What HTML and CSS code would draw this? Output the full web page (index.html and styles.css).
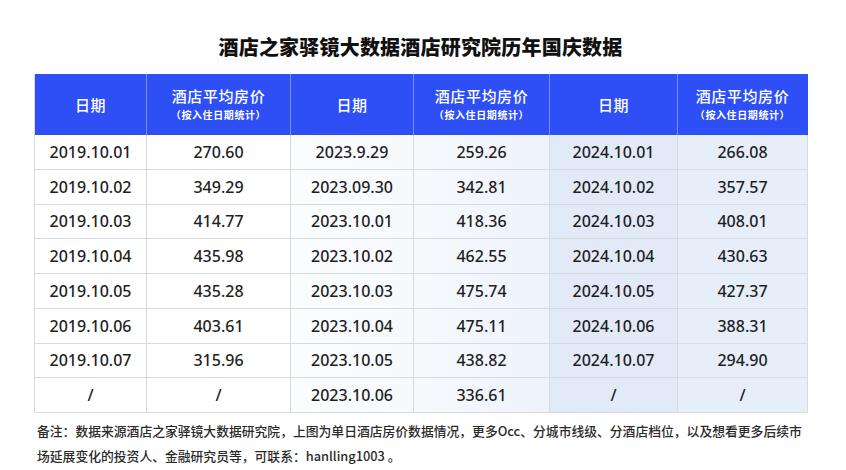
FILE: index.html
```html
<!DOCTYPE html>
<html lang="zh-CN">
<head>
<meta charset="utf-8">
<title>酒店之家驿镜大数据酒店研究院历年国庆数据</title>
<link rel="stylesheet" href="styles.css">
</head>
<body>
<div class="page">
  <h1 class="title">酒店之家驿镜大数据酒店研究院历年国庆数据</h1>
  <div class="grid">
    <div class="hd"><span class="hd-main">日期</span></div>
    <div class="hd"><span class="hd-main">酒店平均房价</span><span class="hd-sub">（按入住日期统计）</span></div>
    <div class="hd"><span class="hd-main">日期</span></div>
    <div class="hd"><span class="hd-main">酒店平均房价</span><span class="hd-sub">（按入住日期统计）</span></div>
    <div class="hd"><span class="hd-main">日期</span></div>
    <div class="hd last"><span class="hd-main">酒店平均房价</span><span class="hd-sub">（按入住日期统计）</span></div>

    <div class="c c1">2019.10.01</div><div class="c c2">270.60</div><div class="c c3">2023.9.29</div><div class="c c4">259.26</div><div class="c c5">2024.10.01</div><div class="c c6">266.08</div>
    <div class="c c1">2019.10.02</div><div class="c c2">349.29</div><div class="c c3">2023.09.30</div><div class="c c4">342.81</div><div class="c c5">2024.10.02</div><div class="c c6">357.57</div>
    <div class="c c1">2019.10.03</div><div class="c c2">414.77</div><div class="c c3">2023.10.01</div><div class="c c4">418.36</div><div class="c c5">2024.10.03</div><div class="c c6">408.01</div>
    <div class="c c1">2019.10.04</div><div class="c c2">435.98</div><div class="c c3">2023.10.02</div><div class="c c4">462.55</div><div class="c c5">2024.10.04</div><div class="c c6">430.63</div>
    <div class="c c1">2019.10.05</div><div class="c c2">435.28</div><div class="c c3">2023.10.03</div><div class="c c4">475.74</div><div class="c c5">2024.10.05</div><div class="c c6">427.37</div>
    <div class="c c1">2019.10.06</div><div class="c c2">403.61</div><div class="c c3">2023.10.04</div><div class="c c4">475.11</div><div class="c c5">2024.10.06</div><div class="c c6">388.31</div>
    <div class="c c1">2019.10.07</div><div class="c c2">315.96</div><div class="c c3">2023.10.05</div><div class="c c4">438.82</div><div class="c c5">2024.10.07</div><div class="c c6">294.90</div>
    <div class="c c1">/</div><div class="c c2">/</div><div class="c c3">2023.10.06</div><div class="c c4">336.61</div><div class="c c5">/</div><div class="c c6">/</div>
  </div>
  <p class="note">备注：数据来源酒店之家驿镜大数据研究院，上图为单日酒店房价数据情况，更多Occ、分城市线级、分酒店档位，以及想看更多后续市<br>场延展变化的投资人、金融研究员等，可联系：hanlling1003 。</p>
</div>
</body>
</html>
```

FILE: styles.css
```css
html, body {
  margin: 0;
  padding: 0;
  background: #ffffff;
}

.page {
  width: 846px;
  height: 470px;
  box-sizing: border-box;
  padding: 34px 0 0 34px;
  font-family: "Noto Sans", "Noto Sans CJK SC", sans-serif;
  color: #222;
}

.title {
  margin: 0 0 14px 0;
  width: 773px;
  text-align: center;
  font-family: "Noto Sans CJK SC", sans-serif;
  font-size: 20px;
  font-weight: 900;
  line-height: 26px;
  color: #111;
  letter-spacing: 0.2px;
}

.grid {
  display: grid;
  grid-template-columns: 112px 144px 123px 136px 128px 130px;
  grid-template-rows: 61px repeat(8, 34.75px);
  width: 773px;
  border-left: 1px solid #d6dae2;
  box-sizing: content-box;
}

.hd {
  background: #2d4ff5;
  color: #fff;
  display: flex;
  flex-direction: column;
  align-items: center;
  justify-content: center;
  border-right: 1px solid #7d92f4;
  font-family: "Noto Sans CJK SC", sans-serif;
}

.hd.last {
  border-right: 1px solid #2d4ff5;
}

.hd-main {
  font-size: 15px;
  font-weight: 500;
  line-height: 20px;
  letter-spacing: 0.6px;
}

.hd-sub {
  font-size: 10px;
  font-weight: 700;
  line-height: 16px;
  letter-spacing: 0.6px;
  margin-top: 1px;
}

.c {
  display: flex;
  align-items: center;
  justify-content: center;
  font-size: 16px;
  font-weight: 500;
  color: #1f1f1f;
  border-right: 1px solid #d6dae2;
  border-bottom: 1px solid #d6dae2;
  box-sizing: border-box;
}

.c1, .c2 {
  background: #ffffff;
}

.c3 {
  background: linear-gradient(to right, #fbfcfe, #f7f9fd);
}

.c4 {
  background: linear-gradient(to right, #f7f9fd, #eef3fb);
}

.c5 {
  background: #e2eaf8;
}

.c6 {
  background: #e6eefa;
}

.note {
  margin: 5px 0 0 3px;
  font-family: "Noto Sans CJK SC", sans-serif;
  font-size: 12.8px;
  font-weight: 500;
  line-height: 25px;
  color: #2a2a2a;
  white-space: nowrap;
}
```
